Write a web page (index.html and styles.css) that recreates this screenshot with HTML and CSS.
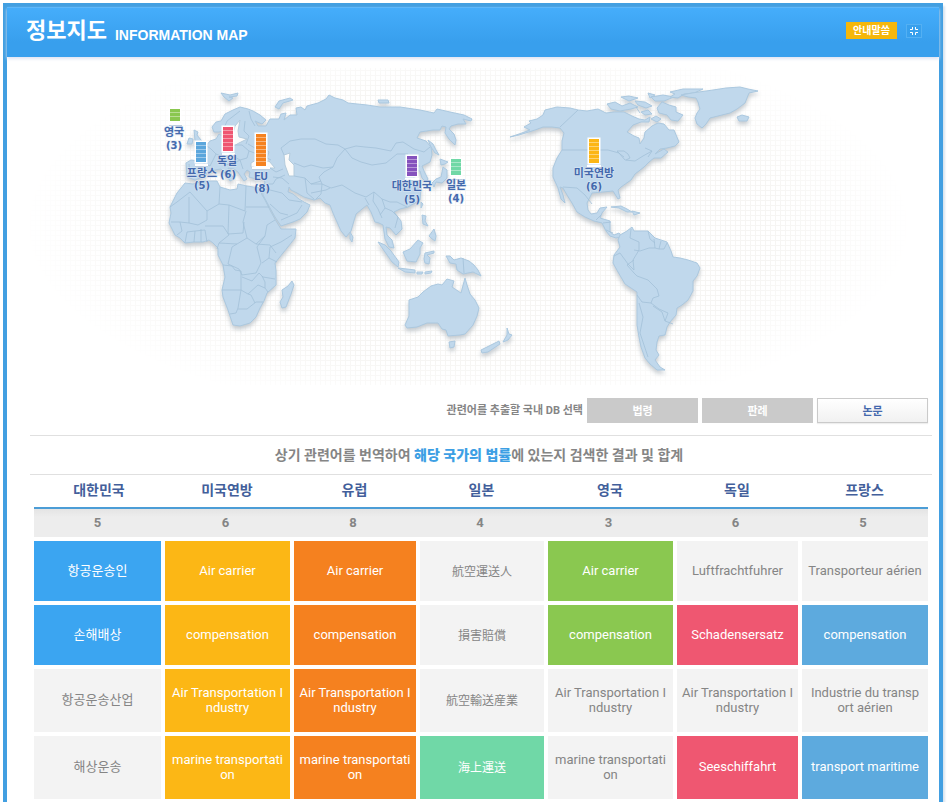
FILE: index.html
```html
<!DOCTYPE html>
<html lang="ko">
<head>
<meta charset="utf-8">
<title>정보지도 INFORMATION MAP</title>
<link rel="stylesheet" href="styles.css">
</head>
<body>
<div class="frame">
  <header class="header">
    <h1 class="title"><span>정보지도</span><span class="title-en">INFORMATION MAP</span></h1>
    <div class="header-tools">
      <button class="notice" type="button">안내말씀</button>
      <button class="collapse" type="button" aria-label="축소">
        <svg width="8" height="8" viewBox="0 0 8 8" aria-hidden="true"><path d="M2.500 0V2.500H0M5.500 0V2.500H8M2.500 8V5.500H0M5.500 8V5.500H8"/></svg>
      </button>
    </div>
  </header>

  <main>
    <svg class="map" viewBox="7 57 932 336" role="img" aria-label="세계 지도">
      <defs>
        <pattern id="grid" width="5" height="5" patternUnits="userSpaceOnUse"><path class="grid-line" d="M0 .5H5M.5 0V5"/></pattern>
        <radialGradient id="fade"><stop offset=".7" stop-color="#fff"/><stop offset="1" stop-color="#000"/></radialGradient>
        <mask id="edge"><ellipse cx="468" cy="225" rx="445" ry="195" fill="url(#fade)"/></mask>
      </defs>
      <rect x="30" y="68" width="880" height="317" fill="url(#grid)" mask="url(#edge)"/>

      <g class="land">
        <!-- Europe and Asia -->
        <path d="M187 177 186 163 191 160 200 161 201 155 196 151 198 147 205 147 210 141 216 139 219 134 222 136 222 131 219 132 214 132 212 127 216 122 221 121 225 114 233 110 240 107 248 109 253 111 260 115 266 120 262 124 255 121 258 126 266 126 270 119 279 119 281 114 286 113 284 120 290 115 297 115 296 108 301 107 305 110 307 106 318 103 326 99 329 95 335 98 343 100 348 103 367 105 380 107 400 107 420 110 434 113 437 109 450 112 464 115 472 119 471 121 463 119 466 124 458 124 451 126 449 129 454 134 456 140 455 145 449 139 445 133 446 127 442 126 440 130 433 130 420 132 417 138 426 141 431 147 432 155 430 162 422 166 424 171 428 179 426 182 422 178 420 171 415 170 411 175 417 180 421 188 420 200 408 207 400 209 394 212 401 221 402 229 396 235 390 228 386 227 387 235 392 240 394 248 389 247 385 239 383 225 379 223 375 222 371 212 367 205 362 209 356 214 353 224 351 231 346 237 341 231 337 222 333 213 330 205 325 203 320 198 314 200 304 197 297 193 291 190 289 187 288 192 293 194 299 199 304 202 310 205 307 212 300 219 293 222 281 226 275 217 270 208 263 195 262 187 265 183 264 178 256 179 249 177 250 172 247 170 244 174 247 179 244 181 238 172 234 169 228 168 231 174 234 179 230 181 226 174 221 169 215 170 208 172 203 177 195 180Z"/>
        <!-- Africa -->
        <path d="M185 183 193 184 204 181 217 181 220 187 230 190 237 189 238 184 247 186 260 188 262 195 265 200 271 212 276 221 281 229 296 229 295 238 283 253 275 263 276 271 276 285 267 293 264 301 260 308 256 317 250 323 240 326 233 325 228 310 223 297 222 290 225 277 223 265 218 255 218 248 213 243 209 240 203 242 194 242 185 243 180 238 175 235 169 223 171 213 170 207 177 193Z"/>
        <path d="M282 290 288 286 292 281 294 285 291 294 286 307 282 308 280 302 283 297Z"/>
        <!-- European islands -->
        <path d="M194 130 198 132 197 135 201 140 203 144 195 147 197 142 195 140Z"/>
        <path d="M189 138 193 139 192 144 187 144Z"/>
        <path d="M221 93 230 95 238 93 237 96 229 97 233 98 229 101 224 97Z"/>
        <path d="M275 107 279 101 290 98 293 100 283 103 279 109Z"/>
        <path d="M378 100 388 100 389 103 379 103Z"/>
        <!-- East Asian islands -->
        <path d="M428 140 433 144 436 150 439 155 435 153 431 147Z"/>
        <path d="M440 159 448 162 445 164 441 165Z"/>
        <path d="M443 167 447 170 447 178 442 183 436 182 434 187 432 183 436 179 441 177Z"/>
        <path d="M421 202 423 204 421 208Z"/>
        <path d="M422 215 426 216 425 221 428 226 423 224Z"/>
        <path d="M434 229 436 236 435 241 431 238 429 236Z"/>
        <path d="M350 232 353 237 352 242 350 239Z"/>
        <path d="M378 242 385 245 391 251 399 262 398 267 392 262 385 252Z"/>
        <path d="M403 252 410 249 418 240 423 243 420 248 420 254 416 262 407 261Z"/>
        <path d="M398 268 407 269 415 270 415 273 405 272Z"/>
        <path d="M417 272 423 272 422 274 417 274ZM425 272 432 271 431 273 425 274ZM425 253 434 251 434 253 427 255 430 258 429 264 425 263 424 259Z"/>
        <path d="M446 256 450 256 454 260 461 258 469 261 474 265 478 270 481 276 473 272 463 274 457 270 456 264 450 263Z"/>
        <!-- Australia and New Zealand -->
        <path d="M409 300 418 297 423 292 431 286 438 284 442 285 447 279 454 281 452 287 461 293 465 278 467 285 470 294 475 300 479 308 477 316 473 325 465 334 460 335 448 336 446 330 442 329 438 323 427 323 417 327 407 328 405 325 409 316Z"/>
        <path d="M449 342 455 341 454 347 450 348Z"/>
        <path d="M507 328 509 334 512 335 508 340 503 342 507 335ZM499 341 500 344 488 352 482 353 481 350Z"/>
        <!-- North America -->
        <path d="M510 137 519 134 530 130 524 127 531 123 529 121 537 119 543 115 545 110 557 107 570 108 578 110 587 111 598 109 606 113 614 112 624 112 632 116 639 119 645 120 650 117 649 122 641 122 633 125 627 132 634 136 639 138 640 144 644 138 645 132 652 126 658 123 664 124 669 130 674 130 679 142 675 146 667 148 660 149 655 154 664 149 668 152 661 158 654 158 649 162 644 167 635 174 631 180 621 187 618 190 620 198 618 199 613 191 603 192 592 193 587 203 588 210 591 214 597 213 600 208 607 207 602 213 600 218 610 221 610 232 614 235 619 233 622 237 616 238 610 236 606 231 602 223 594 221 585 217 577 212 572 203 567 195 563 188 560 187 563 195 565 203 561 199 558 188 553 177 553 168 557 158 562 150 562 141 564 133 560 128 552 127 543 127 535 130 519 135Z"/>
        <path d="M607 104 615 102 622 106 630 103 638 107 631 109 620 111 611 109Z"/>
        <path d="M621 97 629 96 638 98 629 101ZM635 101 645 102 652 106 646 108 638 105ZM648 93 655 95 650 98ZM651 97 663 95 674 97 664 101 655 101Z"/>
        <path d="M657 108 662 102 669 105 676 107 676 112 683 115 678 121 671 120 667 115 659 113ZM651 119 656 116 661 119 657 122ZM641 112 648 110 652 114 645 115Z"/>
        <path d="M670 92 683 89 703 89 694 93 684 94 678 98 670 97 675 94Z"/>
        <path d="M688 97 681 95 692 93 713 90 726 88 740 87 748 89 758 91 749 93 747 98 745 103 737 109 730 113 718 116 710 118 706 124 702 128 697 124 695 118 697 113 700 109 698 102 696 98Z"/>
        <path d="M737 117 742 115 749 117 747 121 739 121Z"/>
        <path d="M611 207 621 206 627 209 632 212 627 212 619 208ZM632 211 640 213 634 215Z"/>
        <!-- South America -->
        <path d="M620 235 627 231 632 227 634 231 648 231 655 238 667 242 671 251 673 257 680 258 688 260 697 263 700 268 697 276 693 281 693 291 688 300 682 305 677 308 676 315 670 322 667 327 665 335 659 336 657 342 656 350 659 355 655 360 660 367 665 370 657 370 650 364 645 358 641 347 639 337 637 325 637 292 625 284 618 272 613 263 614 255 620 247 618 240Z"/>
      </g>

      <!-- Inland seas -->
      <g class="sea">
        <path d="M240 120 235 126 233 134 229 143 232 147 239 143 247 139 239 137 238 131Z"/>
        <path d="M251 163 256 160 261 164 269 161 275 168 260 168 251 167Z"/>
        <path d="M284 155 290 153 289 160 294 165 294 176 289 176 285 165Z"/>
      </g>

      <!-- Country borders -->
      <g class="borders">
        <path d="M189 164 190 175M201 162 210 166 213 160 216 154 211 149 207 146M216 154 223 157 231 155 234 150 229 144M231 155 240 160 247 158 249 151 242 145 234 145M223 157 226 165 234 163 240 160 243 169M249 151 263 156 271 160M245 121 244 131 249 136 246 144M222 133 227 121 240 111M249 111 251 119 255 126M248 144 255 148 260 144 269 152 266 161M270 168 276 172 283 169M273 177 282 178 289 184M266 184 273 184 276 179 285 175M284 155 281 148 290 141 301 139 315 139 326 144 338 145 345 149 356 146 365 147 376 148 391 151 396 143 403 142 414 149 424 152 430 147M345 149 337 158 333 167 323 168 311 165 304 167 294 163M345 149 352 158 361 162 372 165 386 163 397 154 408 154M333 167 324 172 319 177 322 184 331 188 342 185 355 193 366 197 374 192 382 199 390 202 397 202 407 207M294 176 305 178 311 184 321 181M305 178 307 193 314 199M311 184 322 184 321 194 316 199M311 193 326 190 330 188M365 198 369 205M374 192 373 201 378 209 382 218M382 199 385 208 392 211 398 217 395 228M385 208 380 215M420 166 412 166"/>
        <path d="M266 189 282 193 289 200 302 202M281 220 288 217 297 213 302 205M270 204 280 213 288 215"/>
        <path d="M190 192 177 202 170 207M190 192 207 211 219 204 220 187M219 204 229 205 245 211 246 186M246 207 269 207M246 211 243 222 247 238 256 244 265 236 267 225 275 220M229 205 228 234 243 233 244 222M207 211 207 220 198 225 189 223 180 222 171 222M189 223 189 197M185 243 187 232 195 231 205 230 207 242M194 242 195 231M201 242 201 229M205 226 223 226 229 235 219 243 217 249M219 243 237 244 247 238M237 244 232 247 228 264 239 269 242 275 256 273 261 263 257 247 265 236M256 244 270 245 276 253M262 263 269 258 277 262M223 265 232 266 235 270 241 271 241 290 222 290M241 290 238 308 236 313 230 314M238 309 247 309 256 302 263 302M241 290 248 294 258 285 265 288 268 292M255 303 251 295 248 294M242 277 252 281 259 273 263 277 275 279M265 288 265 282 262 276M269 258 270 247 281 242 292 235M180 222 182 231 177 235"/>
        <path d="M560 127 578 110M562 150 608 150 619 153 625 160 635 161 643 156 652 151M563 187 577 188 585 195 592 204M596 220 601 215M603 223 611 222M606 230 613 233M624 157 620 154 617 151 624 151 628 154 630 158 626 160M636 107 640 113M645 148 652 151 648 157"/>
        <path d="M631 229 630 238 639 242 639 250 633 260 634 270 628 264 620 253 614 256M634 250 640 251 649 248 655 248 654 239M634 260 627 265 634 273 637 276 648 280 657 289 659 296 653 298 651 303 642 302 637 295M651 303 659 309 668 313 665 321 662 312 653 306M639 303 643 317 640 333 648 357M665 321 673 324M661 241 659 249 655 248M667 243 664 249 659 249M648 231 650 239 655 243"/>
        <path d="M463 258 464 273"/>
      </g>

      <!-- Result counts per country -->
      <g class="bars">
        <rect x="170" y="109" width="10" height="12" fill="#8ac74f"/>
        <rect x="196" y="142" width="10" height="20" fill="#5ba6dc"/>
        <rect x="223" y="127" width="10" height="24" fill="#ef5571"/>
        <rect x="256" y="134" width="10" height="32" fill="#f58220"/>
        <rect x="407" y="156" width="10" height="20" fill="#8552bd"/>
        <rect x="451" y="159" width="10" height="16" fill="#70d8a6"/>
        <rect x="589" y="139" width="10" height="24" fill="#fcb615"/>
      </g>
      <path class="notches" d="M170 112.500h10m-10 4h10M196 145.500h10m-10 4h10m-10 4h10m-10 4h10M223 130.500h10m-10 4h10m-10 4h10m-10 4h10m-10 4h10M256 137.500h10m-10 4h10m-10 4h10m-10 4h10m-10 4h10m-10 4h10m-10 4h10M407 159.500h10m-10 4h10m-10 4h10m-10 4h10M451 162.500h10m-10 4h10m-10 4h10M589 142.500h10m-10 4h10m-10 4h10m-10 4h10m-10 4h10"/>
      <path class="bases" d="M169 124h13M195 165h13M222 154h13M252 168h18M405 179h14M450 178h13M587 166h14"/>
      <g class="labels">
        <text x="174" y="136">영국</text><text class="num" x="174" y="149">(3)</text>
        <text x="202" y="177">프랑스</text><text class="num" x="202" y="189">(5)</text>
        <text x="227" y="165">독일</text><text class="num" x="228" y="178">(6)</text>
        <text x="261" y="180">EU</text><text class="num" x="262" y="192">(8)</text>
        <text x="412" y="190">대한민국</text><text class="num" x="412" y="203">(5)</text>
        <text x="456" y="189">일본</text><text class="num" x="456" y="202">(4)</text>
        <text x="594" y="177">미국연방</text><text class="num" x="594" y="190">(6)</text>
      </g>
    </svg>

    <div class="db-select">
      <span class="db-label">관련어를 추출할 국내 DB 선택</span>
      <button class="db" type="button">법령</button>
      <button class="db" type="button">판례</button>
      <button class="db db-on" type="button">논문</button>
    </div>

    <p class="summary">상기 관련어를 번역하여 <strong>해당 국가의 법률</strong>에 있는지 검색한 결과 및 합계</p>

    <table class="results">
      <colgroup><col class="c1"><col class="c2"><col class="c3"><col class="c4"><col class="c5"><col class="c6"><col class="c7"></colgroup>
      <thead>
        <tr><th scope="col">대한민국</th><th scope="col">미국연방</th><th scope="col">유럽</th><th scope="col">일본</th><th scope="col">영국</th><th scope="col">독일</th><th scope="col">프랑스</th></tr>
      </thead>
      <tbody>
        <tr class="counts"><td>5</td><td>6</td><td>8</td><td>4</td><td>3</td><td>6</td><td>5</td></tr>
        <tr class="terms"><td class="kr">항공운송인</td><td class="us">Air carrier</td><td class="eu">Air carrier</td><td lang="ja">航空運送人</td><td class="uk">Air carrier</td><td>Luftfrachtfuhrer</td><td>Transporteur aérien</td></tr>
        <tr class="terms"><td class="kr">손해배상</td><td class="us">compensation</td><td class="eu">compensation</td><td lang="ja">損害賠償</td><td class="uk">compensation</td><td class="de">Schadensersatz</td><td class="fr">compensation</td></tr>
        <tr class="terms tall"><td>항공운송산업</td><td class="us">Air Transportation I<br>ndustry</td><td class="eu">Air Transportation I<br>ndustry</td><td lang="ja">航空輸送産業</td><td>Air Transportation I<br>ndustry</td><td>Air Transportation I<br>ndustry</td><td>Industrie du transp<br>ort aérien</td></tr>
        <tr class="terms tall"><td>해상운송</td><td class="us">marine transportati<br>on</td><td class="eu">marine transportati<br>on</td><td class="jp" lang="ja">海上運送</td><td>marine transportati<br>on</td><td class="de">Seeschiffahrt</td><td class="fr">transport maritime</td></tr>
      </tbody>
    </table>
  </main>
</div>
</body>
</html>
```
FILE: styles.css
```css
* { box-sizing: border-box; }

body {
  margin: 0;
  background: #fff;
  color: #858585;
  font: 13px/15px Roboto, "Noto Sans CJK KR", sans-serif;
}

button {
  padding: 0;
  font-family: inherit;
}

.frame {
  min-height: calc(100vh - 3px);
  margin: 3px 4px 0 3px;
  border: 4px solid #429fe1;
  border-bottom: 0;
  box-shadow: 2px 3px 2px #d8e4ee;
}

.header {
  display: flex;
  align-items: center;
  justify-content: space-between;
  height: 50px;
  padding: 0 17px 0 19px;
  border-top: 1px solid #5db7fa;
  background: linear-gradient(#45adfb, #389fed 70%);
  box-shadow: 0 2px 3px #dfe4f4;
}

.title {
  display: flex;
  align-items: flex-end;
  gap: 8px;
  margin: 0;
  padding-bottom: 4px;
  color: #fff;
  font-size: 22px;
  line-height: 30px;
}

.title-en { font: bold 14px/22px "Liberation Sans", sans-serif; }

.header-tools {
  display: flex;
  align-items: center;
  gap: 9px;
  padding-bottom: 4px;
}

.notice {
  width: 51px;
  height: 17px;
  border: 0;
  background: #f5b70b;
  color: #fff;
  font-size: 10px;
  font-weight: bold;
  line-height: 15px;
}

.collapse {
  display: grid;
  place-items: center;
  width: 16px;
  height: 14px;
  border: 1px solid #53b0f3;
  background: #38a0ed;
}

.collapse path { fill: none; stroke: #fff; }

.map { display: block; width: 100%; }
.grid-line { stroke: #f6f5f3; }
.land {
  fill: #c0d8ec;
  stroke: #abc8df;
  filter: drop-shadow(0 3px 2px #c4cacf);
}
.land path, .borders path, .sea path { stroke-linejoin: round; }
.borders { fill: none; stroke: #a3c1d8; stroke-opacity: .8; }
.sea { fill: #fbfbfa; stroke: #b4cbdc; }
.bars rect { stroke: #fff; stroke-width: 3px; paint-order: stroke; }
.notches { stroke: #fff; stroke-opacity: .4; }
.bases { stroke: #fff; stroke-width: 2px; filter: drop-shadow(0 1px 0 #bccddd); }
.labels {
  fill: #4469ad;
  stroke: #dce8f4;
  stroke-width: 1px;
  paint-order: stroke;
  font-size: 11px;
  font-weight: bold;
  text-anchor: middle;
}
.num { font-family: "DejaVu Sans", sans-serif; font-size: 10px; }

.db-select {
  display: flex;
  align-items: center;
  justify-content: flex-end;
  gap: 4px;
  margin-top: 5px;
  padding-right: 11px;
}

.db-label { font-size: 11px; font-weight: bold; }

.db {
  width: 111px;
  height: 25px;
  padding-bottom: 2px;
  border: 1px solid #cacaca;
  background: #cacaca;
  color: #fff;
  font-size: 11px;
  font-weight: bold;
}

.db-on {
  background: linear-gradient(#fff, #f1f1f1);
  box-shadow: 0 1px 1px #eee;
  color: #4469ad;
}

.summary {
  margin: 12px 7px 0 23px;
  padding-right: 4px;
  border: 1px solid #e0e0e0;
  border-width: 1px 0;
  font-size: 14px;
  font-weight: bold;
  line-height: 38px;
  text-align: center;
}

.summary strong { color: #3d9fe4; }

.results {
  width: calc(100% - 38px);
  margin: 0 11px 0 27px;
  border-spacing: 0;
  table-layout: fixed;
  text-align: center;
  white-space: nowrap;
}

.c1 { width: 127px; }
.c2, .c5 { width: 129px; }
.c3 { width: 126px; }
.c4 { width: 128px; }
.c6 { width: 125px; }
.c7 { width: 130px; }

.results th, .results td { padding: 0 0 2px; }

.results th {
  height: 34px;
  padding-left: 3px;
  border-bottom: 2px solid #4c9dd6;
  color: #435f9b;
  font-size: 14px;
}

.counts td {
  height: 28px;
  background: linear-gradient(#e4e4e4, #ededed 8px);
  font-weight: bold;
}

.terms td {
  height: 64px;
  border: solid #fff;
  border-width: 4px 0 0 4px;
  background: #f3f3f3;
}

.terms td:first-child { border-left: 0; }
.terms.tall td { height: 67px; }
.terms [lang="ja"] { font-family: "Noto Sans CJK JP", sans-serif; font-size: 12px; }

.terms .kr, .terms .us, .terms .eu, .terms .jp, .terms .uk, .terms .de, .terms .fr { color: #fff; }
.terms .kr { background: #3ba5f1; }
.terms .us { background: #fcb715; }
.terms .eu { background: #f5811f; }
.terms .jp { background: #70d8a7; }
.terms .uk { background: #8ac850; }
.terms .de { background: #ef5771; }
.terms .fr { background: #5daade; }
```
